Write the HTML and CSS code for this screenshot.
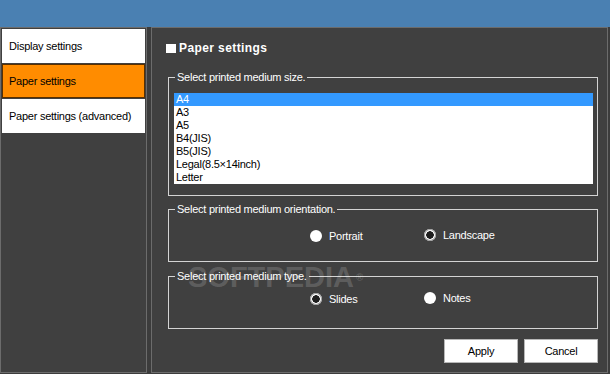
FILE: index.html
```html
<!DOCTYPE html>
<html lang="en">
<head>
  <meta charset="UTF-8">
  <title>Paper settings</title>
  <link rel="stylesheet" href="styles.css">
</head>
<body>

  <div class="titlebar"></div>

  <div class="window">
    <div class="sidebar">
      <div class="nav-item">Display settings</div>
      <div class="nav-item active">Paper settings</div>
      <div class="nav-item">Paper settings (advanced)</div>
    </div>

    <div class="content">
      <h1 class="page-title"><span class="title-mark"></span>Paper settings</h1>

      <fieldset class="group group-size">
        <legend>Select printed medium size.</legend>
        <ul class="listbox">
          <li class="selected">A4</li>
          <li>A3</li>
          <li>A5</li>
          <li>B4(JIS)</li>
          <li>B5(JIS)</li>
          <li>Legal(8.5×14inch)</li>
          <li>Letter</li>
        </ul>
      </fieldset>

      <fieldset class="group group-orient">
        <legend>Select printed medium orientation.</legend>
        <div class="radio-row">
          <label class="radio"><span class="dot"></span>Portrait</label>
          <label class="radio raised"><span class="dot checked"></span>Landscape</label>
        </div>
      </fieldset>

      <fieldset class="group group-type">
        <legend>Select printed medium type.</legend>
        <div class="radio-row">
          <label class="radio"><span class="dot checked"></span>Slides</label>
          <label class="radio raised"><span class="dot"></span>Notes</label>
        </div>
      </fieldset>

      <div class="actions">
        <button class="btn">Apply</button>
        <button class="btn">Cancel</button>
      </div>

      <div class="watermark">SOFTPEDIA<span class="reg">®</span></div>
    </div>
  </div>

</body>
</html>
```

FILE: styles.css
```css
body {
  margin: 0;
  background: #3c3c3c;
  font-family: "Liberation Sans", Arial, sans-serif;
  font-size: 11px;
  letter-spacing: -0.25px;
  color: #000;
}

.titlebar {
  height: 27px;
  background: #4a80b2;
}

.window {
  display: flex;
  height: 346px;
}

/* Sidebar */
.sidebar {
  width: 143px;
  border: 1px solid #6c6c6c;
  background: #404040;
  padding: 1px;
  display: flex;
  flex-direction: column;
  gap: 1px;
}

.nav-item {
  height: 34px;
  box-sizing: border-box;
  background: #fff;
  padding-left: 7px;
  display: flex;
  align-items: center;
}

.nav-item.active {
  background: #ff8c00;
  border: 1px solid #5a3000;
  padding-left: 6px;
}

/* Content */
.content {
  position: relative;
  flex: 1;
  margin-left: 4px;
  margin-right: 2px;
  border: 1px solid #6c6c6c;
  background: #404040;
  padding: 12px 9px 0 16px;
  display: flex;
  flex-direction: column;
}

.page-title {
  margin: 0 0 14px -2px;
  height: 16px;
  display: flex;
  align-items: center;
  color: #fff;
  font-size: 12px;
  font-weight: bold;
  letter-spacing: 0.4px;
}

.title-mark {
  width: 10px;
  height: 9px;
  background: #fff;
  margin-right: 3px;
}

.group {
  margin: 0;
  border: 1px solid #d4d4d4;
  padding: 0 4px 0 5px;
}

.group legend {
  color: #fff;
  line-height: 14px;
  padding: 0 2px;
  margin-left: 1px;
}

.group-size {
  padding-top: 9px;
  padding-bottom: 11px;
}

.listbox {
  list-style: none;
  margin: 0;
  padding: 0;
  background: #fff;
}

.listbox li {
  height: 13px;
  line-height: 13px;
  padding-left: 2px;
}

.listbox li.selected {
  background: #3399ff;
  color: #fff;
}

.group-orient {
  margin-top: 6px;
  padding-top: 12px;
  padding-bottom: 17px;
}

.group-type {
  margin-top: 7px;
  padding-top: 8px;
  padding-bottom: 21px;
}

.radio-row {
  display: grid;
  grid-template-columns: 114px 114px;
  padding-left: 136px;
  height: 16px;
}

.radio {
  display: flex;
  align-items: center;
  color: #fff;
}

.radio.raised {
  margin-top: -3px;
}

.dot {
  width: 12px;
  height: 12px;
  border-radius: 50%;
  background: #fff;
  margin-right: 7px;
  flex-shrink: 0;
}

.dot.checked {
  background: radial-gradient(circle, #1e1e1e 0 3.5px, #fff 4px);
  box-shadow: 0 0 0 1px #9a9a9a inset;
}

.actions {
  display: flex;
  justify-content: flex-end;
  gap: 6px;
  margin-top: 10px;
}

.btn {
  width: 74px;
  height: 24px;
  background: #fff;
  border: 1px solid #b8b8b8;
  font-family: inherit;
  font-size: 11px;
  letter-spacing: -0.25px;
  color: #000;
  padding: 0;
}

/* watermark over the picture */
.watermark {
  position: absolute;
  left: 36px;
  top: 235px;
  font-size: 29px;
  line-height: 29px;
  font-weight: bold;
  letter-spacing: 0;
  color: rgba(255, 255, 255, 0.17);
  pointer-events: none;
}

.watermark .reg {
  font-size: 10px;
  vertical-align: top;
  margin-left: 2px;
}
```
